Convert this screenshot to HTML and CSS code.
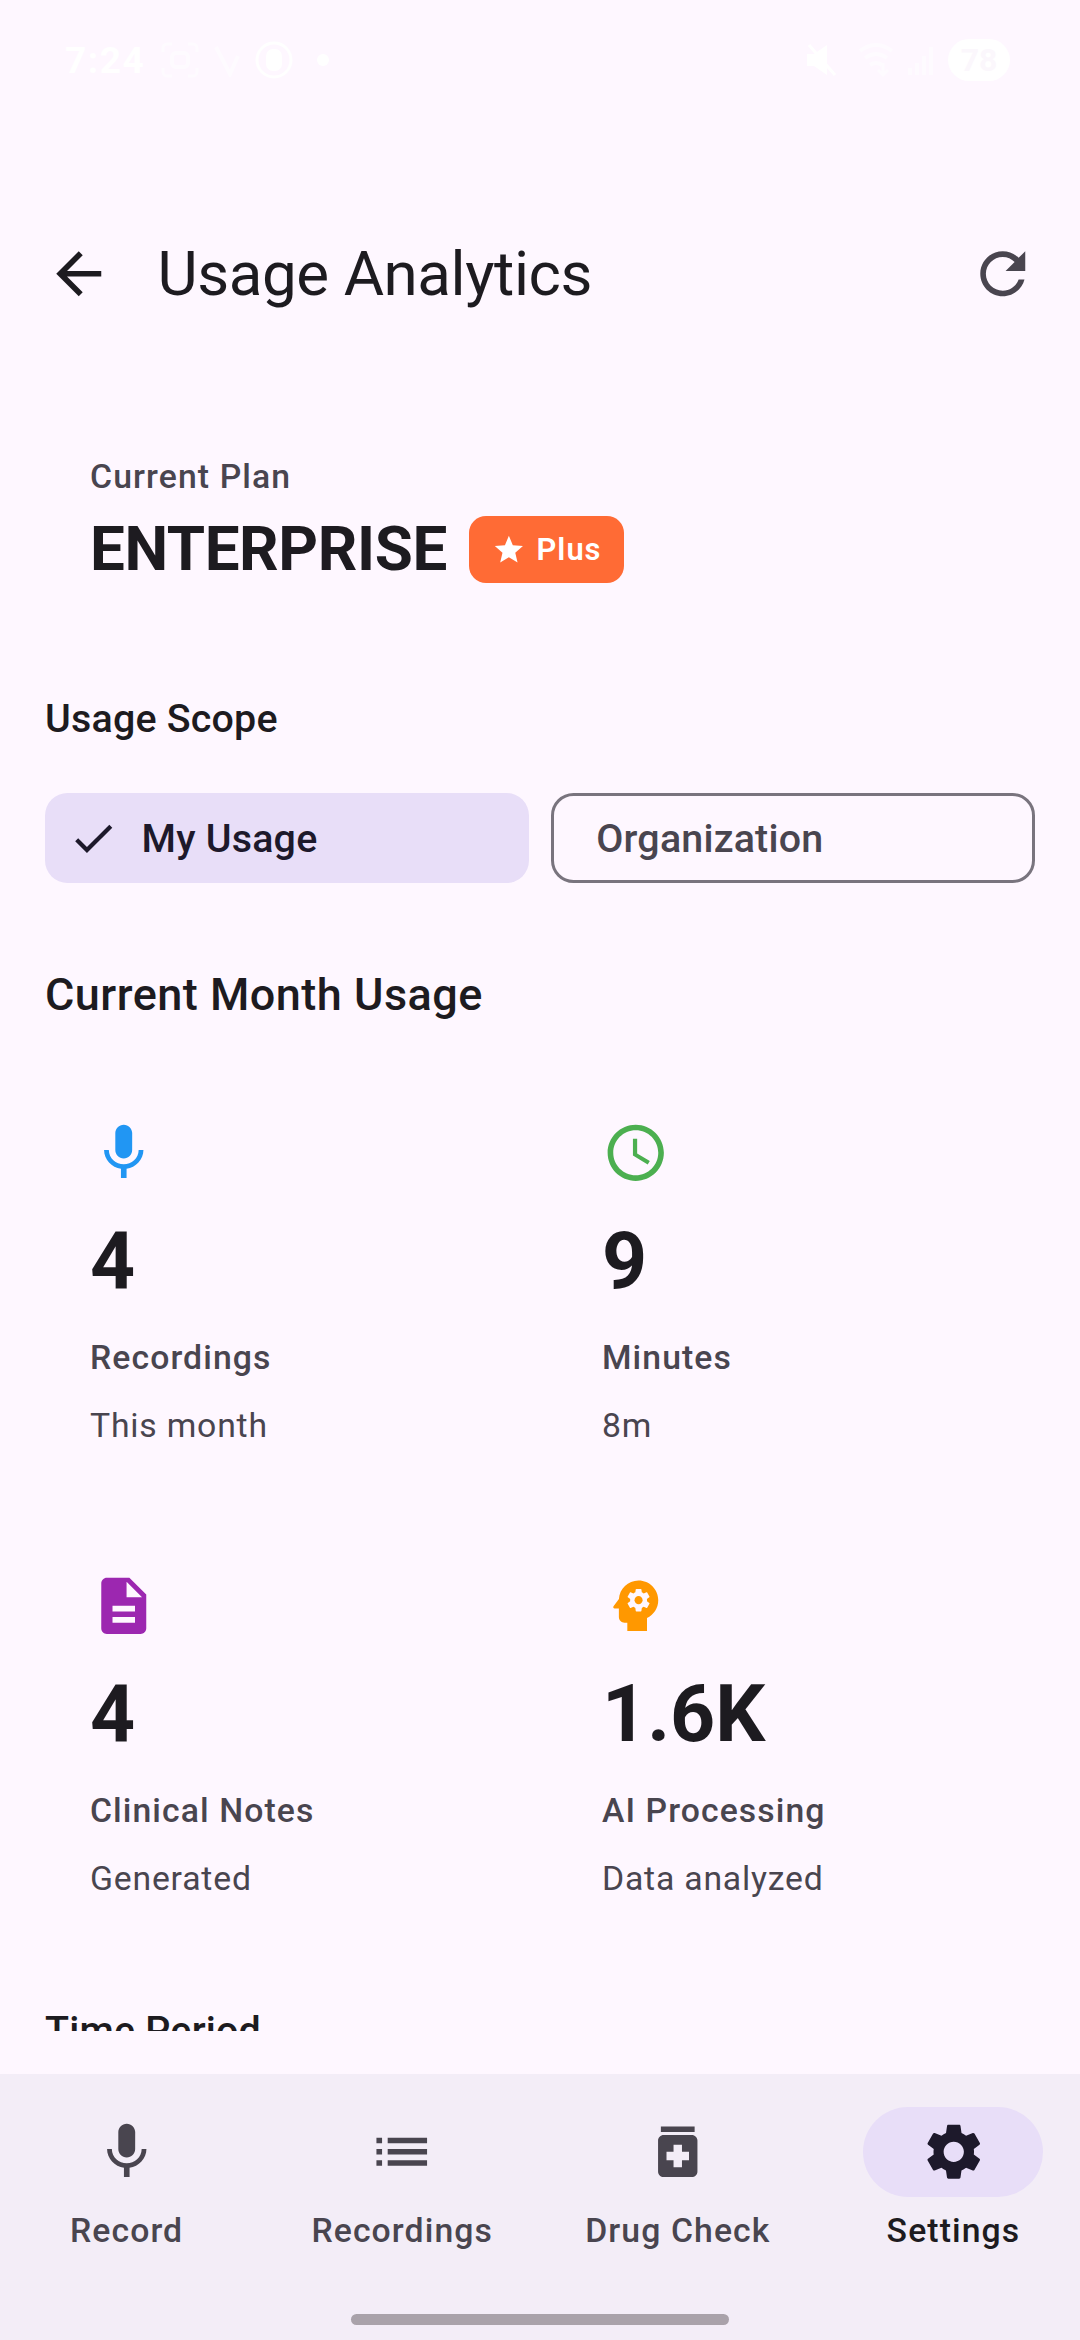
FILE: index.html
```html
<!DOCTYPE html>
<html lang="en">
<head>
    <meta charset="UTF-8">
    <meta name="viewport" content="width=device-width, initial-scale=1.0">
    <title>Usage Analytics</title>
    <link rel="stylesheet" href="styles.css">
</head>
<body>
    <div class="status-bar">
        <div class="status-left">
            <span class="time">7:24</span>
            <svg class="status-icon" width="38" height="36" viewBox="0 0 38 36">
                <path d="M2 10V6a4 4 0 0 1 4-4h5M27 2h5a4 4 0 0 1 4 4v4M36 26v4a4 4 0 0 1-4 4h-5M11 34H6a4 4 0 0 1-4-4v-4" fill="none" stroke="#fff" stroke-width="3"/>
                <rect x="11" y="11" width="16" height="14" rx="4" fill="none" stroke="#fff" stroke-width="4"/>
            </svg>
            <svg class="status-icon" width="32" height="34" viewBox="0 0 32 34">
                <path d="M5 4l14 27 8-18" fill="none" stroke="#fff" stroke-width="4"/>
            </svg>
            <svg width="38" height="38" viewBox="0 0 38 38">
                <circle cx="19" cy="19" r="17" fill="none" stroke="#fff" stroke-width="3"/>
                <rect x="11" y="8" width="16" height="22" rx="7" fill="#fff"/>
            </svg>
            <span class="dot"></span>
        </div>
        <div class="status-right">
            <svg class="mute" width="32" height="34" viewBox="0 0 32 34">
                <path d="M2 11h7l13-9v30l-13-9H2z" fill="#fff"/>
                <path d="M4 2l26 30" stroke="#fff" stroke-width="3"/>
            </svg>
            <svg class="status-icon" width="36" height="34" viewBox="0 0 36 34">
                <path d="M2 8q16-12 32 0M7 15q11-8 22 0M12 22q6-4 12 0" fill="none" stroke="#fff" stroke-width="4"/>
                <path d="M25 20v12M20 27l5 5 5-5" fill="none" stroke="#fff" stroke-width="3"/>
            </svg>
            <svg class="status-icon" width="28" height="34" viewBox="0 0 28 34">
                <path d="M3 32v-7M10 32V20M17 32V13M24 32V4" stroke="#fff" stroke-width="4"/>
            </svg>
            <span class="battery">78</span>
        </div>
    </div>

    <header class="app-bar">
        <svg class="icon back" viewBox="0 0 24 24"><path d="M20 11H7.83l5.59-5.59L12 4l-8 8 8 8 1.41-1.41L7.83 13H20v-2z"/></svg>
        <h1>Usage Analytics</h1>
        <svg class="icon refresh" viewBox="0 0 24 24"><path d="M17.65 6.35C16.2 4.9 14.21 4 12 4c-4.42 0-7.99 3.58-7.99 8s3.57 8 7.99 8c3.73 0 6.84-2.55 7.73-6h-2.08c-.82 2.33-3.04 4-5.65 4-3.31 0-6-2.69-6-6s2.69-6 6-6c1.66 0 3.14.69 4.22 1.78L13 11h7V4l-2.35 2.35z"/></svg>
    </header>

    <main>
        <section class="plan">
            <div class="plan-label">Current Plan</div>
            <div class="plan-row">
                <span class="plan-name">ENTERPRISE</span>
                <span class="badge">
                    <svg viewBox="0 0 24 24"><path d="M12 17.27L18.18 21l-1.64-7.03L22 9.24l-7.19-.61L12 2 9.19 8.63 2 9.24l5.46 4.73L5.82 21z"/></svg>
                    Plus
                </span>
            </div>
        </section>

        <h3>Usage Scope</h3>
        <div class="chips">
            <div class="chip selected">
                <svg viewBox="0 0 24 24"><path d="M9 16.17L4.83 12l-1.42 1.41L9 19 21 7l-1.41-1.41z"/></svg>
                My Usage
            </div>
            <div class="chip">Organization</div>
        </div>

        <h2>Current Month Usage</h2>
        <div class="cards">
            <div class="card">
                <svg class="icon blue" viewBox="0 0 24 24"><path d="M12 14c1.66 0 2.99-1.34 2.99-3L15 5c0-1.66-1.34-3-3-3S9 3.34 9 5v6c0 1.66 1.34 3 3 3zm5.3-3c0 3-2.54 5.1-5.3 5.1S6.7 14 6.7 11H5c0 3.41 2.72 6.23 6 6.72V21h2v-3.28c3.28-.48 6-3.3 6-6.72h-1.7z"/></svg>
                <div class="value">4</div>
                <div class="name">Recordings</div>
                <div class="note">This month</div>
            </div>
            <div class="card">
                <svg class="icon green" viewBox="0 0 24 24"><path d="M11.99 2C6.47 2 2 6.48 2 12s4.47 10 9.99 10C17.52 22 22 17.52 22 12S17.52 2 11.99 2zM12 20c-4.42 0-8-3.58-8-8s3.58-8 8-8 8 3.58 8 8-3.58 8-8 8zm.5-13H11v6l5.25 3.15.75-1.23-4.5-2.67z"/></svg>
                <div class="value">9</div>
                <div class="name">Minutes</div>
                <div class="note">8m</div>
            </div>
            <div class="card">
                <svg class="icon purple" viewBox="0 0 24 24"><path d="M14 2H6c-1.1 0-1.99.9-1.99 2L4 20c0 1.1.89 2 1.99 2H18c1.1 0 2-.9 2-2V8l-6-6zm2 16H8v-2h8v2zm0-4H8v-2h8v2zm-3-5V3.5L18.5 9H13z"/></svg>
                <div class="value">4</div>
                <div class="name">Clinical Notes</div>
                <div class="note">Generated</div>
            </div>
            <div class="card">
                <svg class="icon orange" viewBox="0 0 24 24"><path d="M13 8.57c-.79 0-1.43.64-1.43 1.43s.64 1.43 1.43 1.43 1.43-.64 1.43-1.43-.64-1.43-1.43-1.43z"/><path d="M13 3C9.25 3 6.2 5.94 6.02 9.64L4.1 12.2c-.25.33-.01.8.4.8H6v3c0 1.1.9 2 2 2h1v3h7v-4.68c2.36-1.12 4-3.53 4-6.32 0-3.87-3.13-7-7-7zm3 7c0 .13-.01.26-.02.39l.83.66c.08.06.1.16.05.25l-.8 1.39c-.05.09-.16.12-.24.09l-.99-.4c-.21.16-.43.29-.67.39L14 13.83c-.01.1-.1.17-.2.17h-1.6c-.1 0-.18-.07-.2-.17l-.15-1.06c-.25-.1-.47-.23-.68-.39l-.99.4c-.09.03-.2 0-.25-.09l-.8-1.39c-.05-.08-.03-.19.05-.25l.84-.66c-.01-.13-.02-.26-.02-.39s.02-.27.04-.39l-.85-.66c-.08-.06-.1-.16-.05-.26l.8-1.38c.05-.09.15-.12.24-.09l1 .4c.2-.15.43-.29.67-.39L12 6.17c.02-.1.1-.17.2-.17h1.6c.1 0 .18.07.2.17l.15 1.06c.24.1.46.23.67.39l1-.4c.09-.03.2 0 .24.09l.8 1.38c.05.09.03.2-.05.26l-.85.66c.03.12.04.25.04.39z"/></svg>
                <div class="value">1.6K</div>
                <div class="name">AI Processing</div>
                <div class="note">Data analyzed</div>
            </div>
        </div>

        <h3 class="period">Time Period</h3>
    </main>

    <nav>
        <div class="tabs">
            <div class="tab">
                <div class="pill"><svg class="icon" viewBox="0 0 24 24"><path d="M12 14c1.66 0 2.99-1.34 2.99-3L15 5c0-1.66-1.34-3-3-3S9 3.34 9 5v6c0 1.66 1.34 3 3 3zm5.3-3c0 3-2.54 5.1-5.3 5.1S6.7 14 6.7 11H5c0 3.41 2.72 6.23 6 6.72V21h2v-3.28c3.28-.48 6-3.3 6-6.72h-1.7z"/></svg></div>
                Record
            </div>
            <div class="tab">
                <div class="pill"><svg class="icon" viewBox="0 0 24 24"><path d="M3 13h2v-2H3v2zm0 4h2v-2H3v2zm0-8h2V7H3v2zm4 4h14v-2H7v2zm0 4h14v-2H7v2zM7 7v2h14V7H7z"/></svg></div>
                Recordings
            </div>
            <div class="tab">
                <div class="pill"><svg class="icon" viewBox="0 0 24 24"><path d="M6 3h12v2H6zM17 6H7c-1.1 0-2 .9-2 2v11c0 1.1.9 2 2 2h10c1.1 0 2-.9 2-2V8c0-1.1-.9-2-2-2zm-1 9h-2.5v2.5h-3V15H8v-3h2.5V9.5h3V12H16v3z"/></svg></div>
                Drug Check
            </div>
            <div class="tab active">
                <div class="pill"><svg class="icon" viewBox="0 0 24 24"><path d="M19.14 12.94c.04-.3.06-.61.06-.94 0-.32-.02-.64-.07-.94l2.03-1.58c.18-.14.23-.41.12-.61l-1.92-3.32c-.12-.22-.37-.29-.59-.22l-2.39.96c-.5-.38-1.03-.7-1.62-.94l-.36-2.54c-.04-.24-.24-.41-.48-.41h-3.84c-.24 0-.43.17-.47.41l-.36 2.54c-.59.24-1.13.57-1.62.94l-2.39-.96c-.22-.08-.47 0-.59.22L2.74 8.87c-.12.21-.08.47.12.61l2.03 1.58c-.05.3-.09.63-.09.94s.02.64.07.94l-2.03 1.58c-.18.14-.23.41-.12.61l1.92 3.32c.12.22.37.29.59.22l2.39-.96c.5.38 1.03.7 1.62.94l.36 2.54c.05.24.24.41.48.41h3.84c.24 0 .44-.17.47-.41l.36-2.54c.59-.24 1.13-.56 1.62-.94l2.39.96c.22.08.47 0 .59-.22l1.92-3.32c.12-.22.07-.47-.12-.61l-2.01-1.58zM12 15.6c-1.98 0-3.6-1.62-3.6-3.6s1.62-3.6 3.6-3.6 3.6 1.62 3.6 3.6-1.62 3.6-3.6 3.6z"/></svg></div>
                Settings
            </div>
        </div>
        <div class="home-bar"></div>
    </nav>
</body>
</html>
```
FILE: styles.css
```css
* {
    box-sizing: border-box;
}
body {
    margin: 0;
    width: 1080px;
    height: 2340px;
    display: flex;
    flex-direction: column;
    overflow: hidden;
    font-family: Roboto, "Liberation Sans", sans-serif;
    color: #1d1b20;
    background-color: #fef7ff;
}
h1, h2, h3 {
    margin: 0;
    font-weight: 500;
}
svg {
    display: block;
    flex-shrink: 0;
    fill: currentColor;
}
.icon {
    width: 67.5px;
    height: 67.5px;
}

/* status bar */
.status-bar {
    height: 184px;
    padding: 38px 70px 0 65px;
    display: flex;
    justify-content: space-between;
    color: #fff;
}
.status-left, .status-right {
    display: flex;
    align-items: center;
    height: 44px;
}
.status-left {
    gap: 12px;
}
.status-right {
    gap: 13px;
}
.status-icon {
    opacity: 0.5;
}
.time {
    margin-right: 4px;
    font-size: 37px;
    font-weight: 700;
    letter-spacing: 1.5px;
}
.dot {
    width: 12px;
    height: 12px;
    margin-left: 12px;
    border-radius: 50%;
    background-color: #fff;
}
.mute {
    margin-right: 8px;
}
.battery {
    width: 62px;
    height: 42px;
    border-radius: 21px;
    background-color: #fff;
    color: #fbf7fc;
    font-size: 32px;
    font-weight: 700;
    line-height: 42px;
    text-align: center;
}

/* title row */
.app-bar {
    height: 180px;
    padding: 0 44px 0 45px;
    display: flex;
    align-items: center;
}
h1 {
    flex: 1;
    margin-left: 45px;
    font-size: 61.9px;
    line-height: 78px;
    font-weight: 400;
    letter-spacing: -0.42px;
}
.refresh {
    color: #49454f;
}

main {
    height: 1667px;
    padding: 45px 45px 0;
    overflow: hidden;
}
.plan {
    height: 225px;
    padding: 45px;
}
.plan-label {
    margin-bottom: 11px;
    font-size: 33.75px;
    line-height: 45px;
    font-weight: 500;
    letter-spacing: 1.1px;
    color: #49454f;
}
.plan-row {
    display: flex;
    align-items: center;
    gap: 22.5px;
}
.plan-name {
    font-size: 61.9px;
    line-height: 79px;
    font-weight: 700;
    letter-spacing: -0.42px;
}
.badge {
    height: 67px;
    padding: 0 22.5px;
    display: flex;
    align-items: center;
    gap: 11px;
    border-radius: 17px;
    background-color: #ff6b35;
    color: #fff;
    font-size: 30.9px;
    font-weight: 600;
    letter-spacing: 1px;
}
.badge svg {
    width: 33.75px;
    height: 33.75px;
}

h3 {
    margin-top: 57px;
    font-size: 39.4px;
    line-height: 56px;
    letter-spacing: 0.2px;
}
.chips {
    display: grid;
    grid-template-columns: 1fr 1fr;
    gap: 22.5px;
    margin-top: 46px;
}
.chip {
    height: 90px;
    padding-left: 42px;
    display: flex;
    align-items: center;
    border: 3px solid #79747e;
    border-radius: 22.5px;
    font-size: 39.4px;
    font-weight: 500;
    letter-spacing: 0.2px;
    color: #49454f;
}
.chip.selected {
    padding-left: 22.5px;
    gap: 23.5px;
    border: none;
    background-color: #e8def8;
    color: #1d192b;
}
.chip svg {
    width: 50.6px;
    height: 50.6px;
}

h2 {
    margin-top: 78px;
    font-size: 45px;
    line-height: 68px;
    letter-spacing: 0.48px;
}
.cards {
    display: grid;
    grid-template-columns: 1fr 1fr;
    grid-auto-rows: 419px;
    gap: 34px;
    margin-top: 45px;
}
.card {
    padding: 45px;
}
.value {
    margin-top: 24px;
    font-size: 78.75px;
    line-height: 101px;
    font-weight: 700;
}
.name, .note {
    margin-top: 23px;
    font-size: 33.75px;
    line-height: 45px;
    color: #49454f;
}
.name {
    font-weight: 500;
    letter-spacing: 1.08px;
}
.note {
    letter-spacing: 0.8px;
}
.blue { color: #2196f3; }
.green { color: #4caf50; }
.purple { color: #9c27b0; }
.orange { color: #ff9800; }

/* bottom navigation */
nav {
    height: 266px;
    margin-top: auto;
    padding-top: 33px;
    background-color: #f3edf7;
}
.tabs {
    display: grid;
    grid-template-columns: repeat(4, 1fr);
    gap: 22.5px;
}
.tab {
    display: flex;
    flex-direction: column;
    align-items: center;
    gap: 11px;
    font-size: 33.75px;
    line-height: 45px;
    font-weight: 500;
    letter-spacing: 1.1px;
    color: #49454f;
}
.active {
    color: #1d1b20;
}
.pill {
    width: 180px;
    height: 90px;
    display: flex;
    align-items: center;
    justify-content: center;
    border-radius: 45px;
}
.active .pill {
    background-color: #e8def8;
    color: #1d192b;
}
.home-bar {
    width: 378px;
    height: 11px;
    margin: 61px auto 0;
    border-radius: 6px;
    background-color: #a9a2aa;
}
```
